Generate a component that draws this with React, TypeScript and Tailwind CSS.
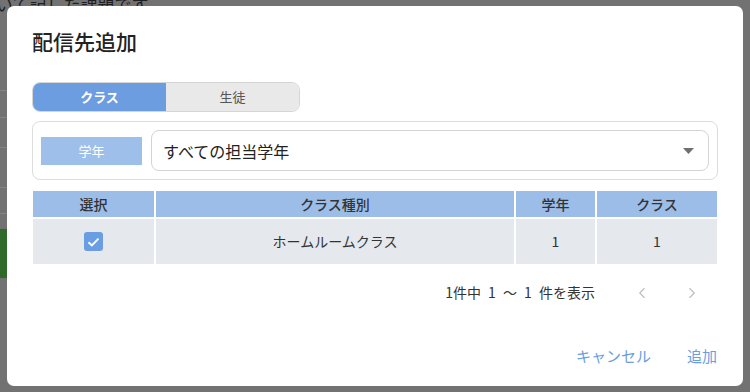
import { ChevronLeft, ChevronRight } from 'lucide-react';

const font = { fontFamily: '"Noto Sans CJK JP", "Noto Sans", sans-serif' };

const rows = [
  { kind: 'ホームルームクラス', grade: '1', cls: '1', checked: true },
];

function Backdrop() {
  return (
    <div className="w-[750px] h-[392px] bg-[#727272] overflow-hidden">
      <div className="-mt-[6px] -ml-[4px] text-[17px] leading-[20px] text-[#1e1e1e]">いて記した課題です。</div>
      <div className="w-[7px] mt-[76px]">
        <div className="h-[27px] border-t border-[#858585]" />
        <div className="h-[30px] border-t border-[#858585]" />
        <div className="h-[40px] border-t border-[#858585]" />
        <div className="h-[26px] border-t border-[#858585]" />
        <div className="h-[16px] border-t border-[#858585]" />
        <div className="h-[49px] bg-[#2f6a2a]" />
      </div>
    </div>
  );
}

export default function App() {
  return (
    <div className="relative w-[750px] h-[392px] overflow-hidden" style={font}>
      <Backdrop />
      <div className="absolute left-[7px] top-[6px] w-[736px] h-[380px] bg-white rounded-[7px] flex flex-col">
        <h1 className="pt-[21px] px-[25px] text-[21px] leading-[28px] text-[#222] font-medium">配信先追加</h1>

        <div className="mt-[27px] px-[25px]">
          <div className="flex w-[268px] h-[30px] rounded-[8px] overflow-hidden border border-[#d6d6d6]">
            <div className="w-[133px] bg-[#6b9de0] flex items-center justify-center text-[13px] font-bold text-white">クラス</div>
            <div className="flex-1 bg-[#e9e9e9] flex items-center justify-center text-[13px] text-[#555]">生徒</div>
          </div>
        </div>

        <div className="mt-[9px] px-[25px]">
          <div className="flex items-center gap-[9px] h-[59px] p-[8px] rounded-[8px] border border-[#dcdcdc]">
            <div className="w-[101px] h-[28px] bg-[#9dbfe9] flex items-center justify-center text-[13px] text-white">学年</div>
            <div className="flex-1 h-[41px] rounded-[8px] border border-[#d4d4d4] flex items-center justify-between pl-[11px] pr-[14px]">
              <span className="text-[16px] text-[#222]">すべての担当学年</span>
              <svg width="11" height="6" viewBox="0 0 11 6"><path d="M0 0h11L5.5 6z" fill="#6f6f6f" /></svg>
            </div>
          </div>
        </div>

        <div className="mt-[11px] px-[26px]">
          <div className="grid grid-cols-[121px_358px_79px_120px] gap-[2px] text-[14px] text-[#333]">
            <div className="h-[26px] bg-[#9bbde8] flex items-center justify-center font-medium">選択</div>
            <div className="h-[26px] bg-[#9bbde8] flex items-center justify-center font-medium">クラス種別</div>
            <div className="h-[26px] bg-[#9bbde8] flex items-center justify-center font-medium">学年</div>
            <div className="h-[26px] bg-[#9bbde8] flex items-center justify-center font-medium">クラス</div>
            {rows.map((r) => (
              <>
                <div key={r.kind + 'c'} className="h-[45px] bg-[#e5e8ed] flex items-center justify-center">
                  <div className="w-[19px] h-[19px] rounded-[3px] bg-[#6a9de2] flex items-center justify-center">
                    {r.checked && (
                      <svg width="13" height="10" viewBox="0 0 13 10"><path d="M1.5 5.2l3.4 3.2L11.5 1.6" stroke="white" strokeWidth="2" fill="none" /></svg>
                    )}
                  </div>
                </div>
                <div className="h-[45px] bg-[#e5e8ed] flex items-center justify-center">{r.kind}</div>
                <div className="h-[45px] bg-[#e5e8ed] flex items-center justify-center">{r.grade}</div>
                <div className="h-[45px] bg-[#e5e8ed] flex items-center justify-center">{r.cls}</div>
              </>
            ))}
          </div>
        </div>

        <div className="mt-[18px] px-[26px] flex items-center justify-end text-[14px] text-[#333]">
          <span className="[word-spacing:4px]">1件中 1 ～ 1 件を表示</span>
          <ChevronLeft className="ml-[38px]" size={18} strokeWidth={1.5} color="#bdbdbd" />
          <ChevronRight className="ml-[32px] mr-[16px]" size={18} strokeWidth={1.5} color="#bdbdbd" />
        </div>

        <div className="mt-auto mb-[19px] px-[26px] flex items-center justify-end gap-[36px] text-[15px] text-[#6a9ee0]">
          <span>キャンセル</span>
          <span>追加</span>
        </div>
      </div>
    </div>
  );
}
